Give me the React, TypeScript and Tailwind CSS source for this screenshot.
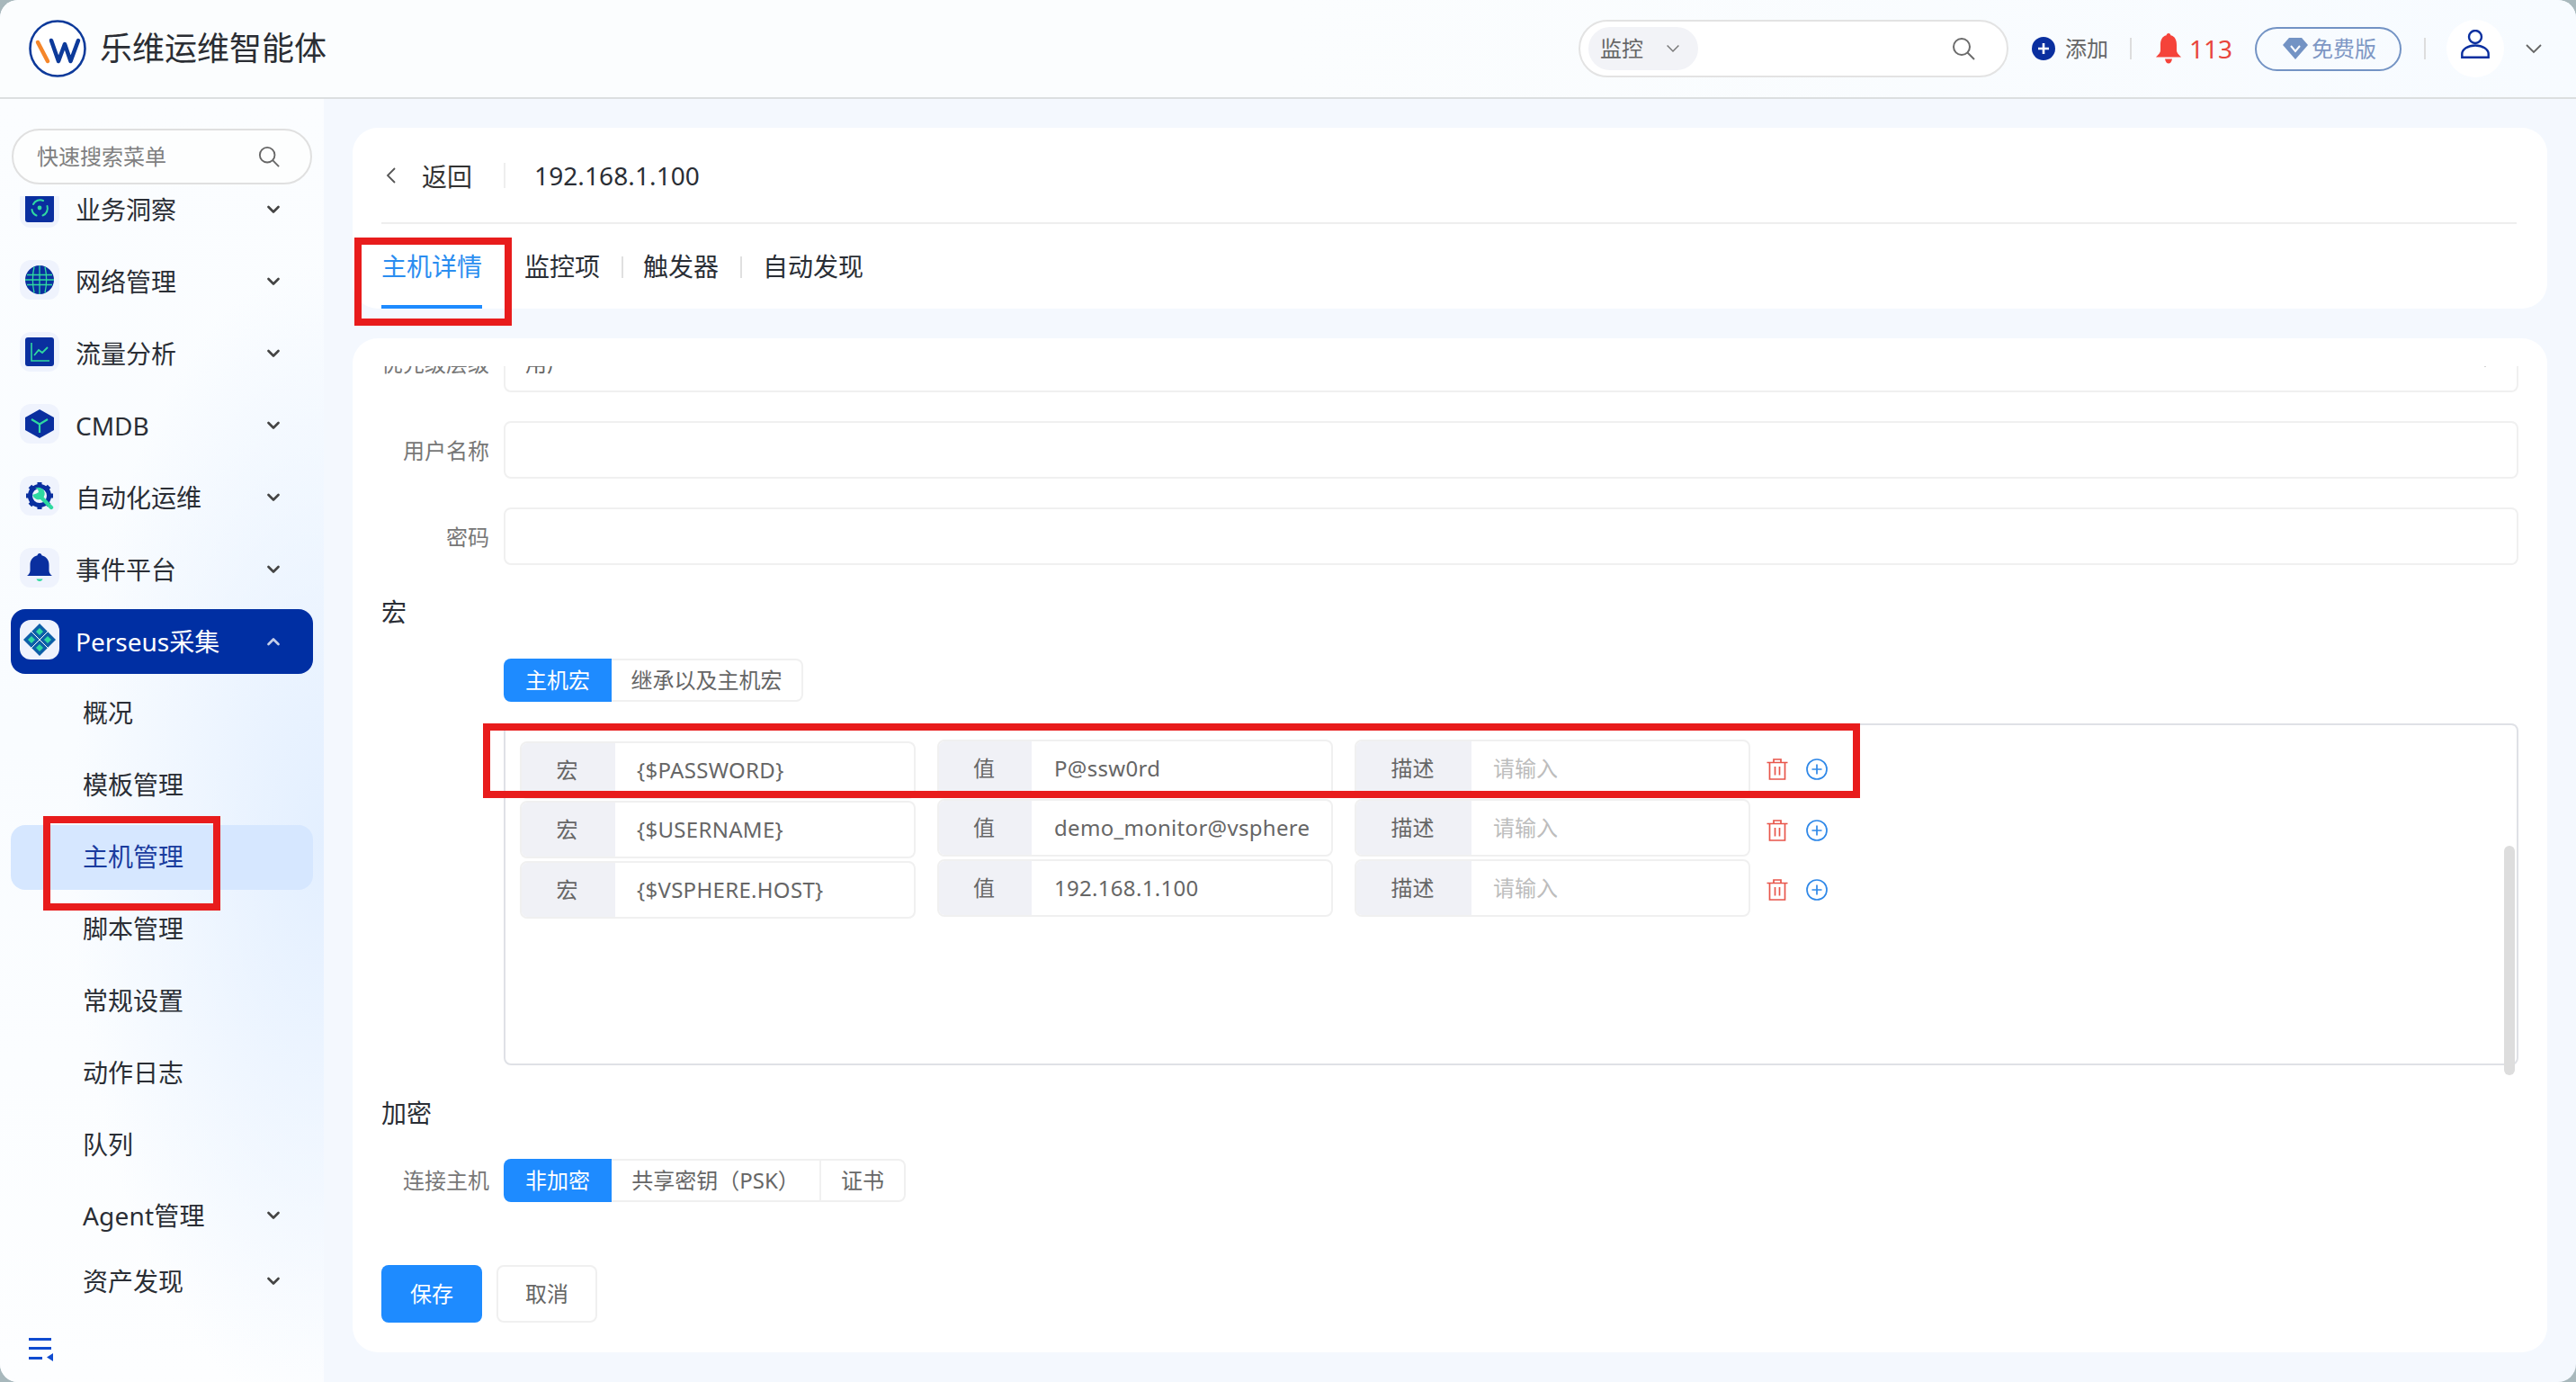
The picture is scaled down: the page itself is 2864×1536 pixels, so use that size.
import React from "react";

const Chev = ({ up = false, color = "#444" }: { up?: boolean; color?: string }) => (
  <svg width="14" height="10" viewBox="0 0 14 10" fill="none" className="ml-auto mr-[37px] shrink-0">
    <path d={up ? "M1.5 8L7 2.5L12.5 8" : "M1.5 2L7 7.5L12.5 2"} stroke={color} strokeWidth="2.6" strokeLinecap="round" strokeLinejoin="round" />
  </svg>
);

const Thin = ({ w = 14, c = "#777" }: { w?: number; c?: string }) => (
  <svg width={w} height={w * 0.6} viewBox="0 0 20 12" fill="none" className="shrink-0">
    <path d="M2 2L10 10L18 2" stroke={c} strokeWidth="1.8" />
  </svg>
);

const SearchIcon = ({ s = 26, c = "#6b6b6b" }: { s?: number; c?: string }) => (
  <svg width={s} height={s} viewBox="0 0 26 26" fill="none" className="shrink-0">
    <circle cx="11" cy="11" r="9" stroke={c} strokeWidth="2" />
    <path d="M17.5 17.5L25 25" stroke={c} strokeWidth="2" />
  </svg>
);

const Blue = "#0a2f9f";
const Green = "#2fd9a0";

const IconBiz = () => (
  <svg viewBox="0 0 32 32" className="w-[32px] h-[32px]">
    <rect width="32" height="32" rx="3" fill={Blue} />
    <path d="M9 12a8.5 8.5 0 0 1 11-4M24.5 14a8.5 8.5 0 0 1-5 10.5M12.5 24.5A8.5 8.5 0 0 1 7.5 18" fill="none" stroke={Green} strokeWidth="2" strokeLinecap="round" />
    <circle cx="16" cy="16" r="2.4" fill={Green} />
  </svg>
);
const IconGlobe = () => (
  <svg viewBox="0 0 32 32" className="w-[32px] h-[32px]">
    <circle cx="16" cy="16" r="16" fill={Blue} />
    <path d="M2 10.5h28M0 16h32M2 21.5h28M10 1.5c-2 9-2 20 0 29M16 0v32M22 1.5c2 9 2 20 0 29" fill="none" stroke={Green} strokeWidth="1.3" />
  </svg>
);
const IconChart = () => (
  <svg viewBox="0 0 32 32" className="w-[32px] h-[32px]">
    <rect width="32" height="32" rx="3" fill={Blue} />
    <path d="M7 6v20h20" fill="none" stroke={Green} strokeWidth="1.6" />
    <path d="M10 20l5-6 4 3 6-6" fill="none" stroke={Green} strokeWidth="1.8" />
  </svg>
);
const IconCube = () => (
  <svg viewBox="0 0 32 32" className="w-[32px] h-[32px]">
    <path d="M16 0L32 9V23L16 32L0 23V9Z" fill={Blue} />
    <path d="M7 11L16 16.5L25 11M16 16.5V26" fill="none" stroke={Green} strokeWidth="2.2" />
  </svg>
);
const IconGear = () => (
  <svg viewBox="0 0 32 32" className="w-[32px] h-[32px]">
    <circle cx="16" cy="16" r="10.5" fill="#eff3fd" stroke={Blue} strokeWidth="5" />
    <path d="M16 1v6M16 25v6M1 16h6M25 16h6M5.4 5.4l4.2 4.2M22.4 22.4l4.2 4.2M26.6 5.4l-4.2 4.2M9.6 22.4l-4.2 4.2" stroke={Blue} strokeWidth="5" />
    <path d="M17 17L29 29" stroke={Green} strokeWidth="4.4" strokeLinecap="round" />
    <path d="M11 7.500a7.500 7.500 0 0 1 10 3a7.500 7.500 0 0 1-2.500 9a7.500 7.500 0 0 1-10.500-4.500l4.500-1.500l2.500-1.500l-1-3.500Z" fill={Green} />
  </svg>
);
const IconBell = () => (
  <svg viewBox="0 0 32 32" className="w-[32px] h-[32px]">
    <path d="M16 0c1.5 0 2.3 1 2.4 2.3C24 3.6 26.5 8 26.5 13v6c0 3 1.8 4.6 3.5 6H2c1.700-1.400 3.500-3 3.500-6v-6C5.500 8 8 3.600 13.600 2.300 13.700 1 14.500 0 16 0Z" fill={Blue} />
    <path d="M12.500 28.500h7c-.5 1.600-1.700 2.500-3.500 2.500s-3-.9-3.500-2.500Z" fill={Green} />
  </svg>
);
const IconPerseus = () => (
  <svg viewBox="0 0 36 36" className="w-[36px] h-[36px]">
    <path d="M18 0L36 18L18 36L0 18Z" fill="#0d5fa8" />
    <path d="M9 9L27 27M27 9L9 27" stroke="#fff" strokeWidth="1" />
    <path d="M18 5l4 4-4 4-4-4ZM27 14l4 4-4 4-4-4ZM18 23l4 4-4 4-4-4ZM9 14l4 4-4 4-4-4Z" fill={Green} />
  </svg>
);

type Item = { label: string; icon?: React.ReactNode; arrow?: boolean; cls: string };

const top: Item[] = [
  { label: "业务洞察", icon: <IconBiz />, arrow: true, cls: "mb-[8px]" },
  { label: "网络管理", icon: <IconGlobe />, arrow: true, cls: "mb-[8px]" },
  { label: "流量分析", icon: <IconChart />, arrow: true, cls: "mb-[8px]" },
  { label: "CMDB", icon: <IconCube />, arrow: true, cls: "mb-[8px]" },
  { label: "自动化运维", icon: <IconGear />, arrow: true, cls: "mb-[8px]" },
  { label: "事件平台", icon: <IconBell />, arrow: true, cls: "mb-[8px]" },
];

const MenuRow = ({ it }: { it: Item }) => (
  <div className={`flex items-center h-[72px] pl-[10px] text-[28px] leading-[40px] text-[#2a2e35] ${it.cls}`}>
    <div className="w-[44px] h-[44px] rounded-[12px] bg-[#eff3fd] flex items-center justify-center mr-[18px] -mt-[4px]">{it.icon}</div>
    <span>{it.label}</span>
    {it.arrow && <Chev />}
  </div>
);

const subs = [
  { label: "概况" },
  { label: "模板管理" },
  { label: "主机管理", active: true },
  { label: "脚本管理" },
  { label: "常规设置" },
  { label: "动作日志" },
  { label: "队列" },
];

const Field = ({ label, value, clipTop = false, arrow = false }: { label: string; value?: string; clipTop?: boolean; arrow?: boolean }) => (
  <div className={`flex items-center h-[64px] gap-[16px] ${clipTop ? "-mt-[35px]" : "mt-[32px]"}`}>
    <div className={`w-[120px] text-right text-[24px] leading-[36px] text-[#777] whitespace-nowrap ${clipTop ? "" : "pt-[2px]"}`}>{label}</div>
    <div className="flex-1 h-full rounded-[8px] border-2 border-[#f0f0f0] flex items-center px-[22px] text-[24px] text-[#666] leading-[36px]">
      {value}
      {arrow && <span className="ml-auto mr-[6px]"><Thin w={14} c="#999" /></span>}
    </div>
  </div>
);

const Group = ({ addon, addonW, value, placeholder, cls, valueCls = "" }: { addon: string; addonW: string; value?: string; placeholder?: string; cls: string; valueCls?: string }) => (
  <div className={`flex w-[440px] h-[64px] rounded-[8px] border-2 border-[#f0f0f0] overflow-hidden bg-white ${cls}`}>
    <div className={`${addonW} shrink-0 bg-[#f0f1f6] flex items-center justify-center pr-[3px] text-[24px] text-[#666] leading-[36px]`}>{addon}</div>
    <div className={`flex-1 flex items-center text-[24px] leading-[36px] whitespace-nowrap ${placeholder ? "text-[#bdbdbd]" : "text-[#666] tracking-[0.3px]"} ${valueCls}`}>{value ?? placeholder}</div>
  </div>
);

const Trash = () => (
  <svg width="24" height="24" viewBox="0 0 24 24" fill="none" stroke="#e8564b" strokeWidth="1.7">
    <path d="M0.500 4.500H23.500M8 4.500V1H16V4.500M3.500 4.500V23H20.500V4.500M9.500 9V18.500M14.500 9V18.500" />
  </svg>
);
const PlusC = () => (
  <svg width="24" height="24" viewBox="0 0 24 24" fill="none" stroke="#2f88e8" strokeWidth="1.7">
    <circle cx="12" cy="12" r="11" />
    <path d="M12 6.500V17.500M6.500 12H17.500" />
  </svg>
);

const macros = [
  { k: "{$PASSWORD}", v: "P@ssw0rd", cls: "", act: "mt-[1px]" },
  { k: "{$USERNAME}", v: "demo_monitor@vsphere", cls: "mt-[2px]", act: "mt-[3px]" },
  { k: "{$VSPHERE.HOST}", v: "192.168.1.100", cls: "mt-[3px]", act: "mt-[2px]" },
];

export default function App() {
  return (
    <div className="w-[2864px] h-[1536px] bg-[#a8b8bc] overflow-hidden [font-family:'Noto_Sans','Noto_Sans_CJK_SC',sans-serif]">
      <div className="relative w-full h-full rounded-[20px] overflow-hidden flex flex-col bg-[#f4f8fe]">
        {/* header */}
        <header className="h-[110px] shrink-0 flex items-center border-b-2 border-[#dcdfe0] bg-[linear-gradient(90deg,#fbfdfe_0%,#fbfdfe_50%,#f7fbff_100%)] pl-[32px] pr-[37px]">
          <svg width="64" height="64" viewBox="0 0 64 64" fill="none" className="shrink-0">
            <circle cx="32" cy="32" r="30.500" fill="#fff" stroke="#0d3a9a" strokeWidth="2.600" />
            <path d="M10 25L21 46" stroke="#f5862a" strokeWidth="4.500" strokeLinecap="round" />
            <path d="M25 23L33 46L40 27L46.500 46L55 23" stroke="#0d3a9a" strokeWidth="4.500" strokeLinecap="round" strokeLinejoin="round" />
          </svg>
          <div className="ml-[15px] text-[36px] leading-[50px] text-[#2a2d33] whitespace-nowrap">乐维运维智能体</div>

          <div className="ml-auto w-[478px] h-[64px] rounded-full border-2 border-[#e3e3e3] bg-white flex items-center pl-[9px] pr-[35px]">
            <div className="w-[122px] h-[48px] rounded-full bg-[#f2f3f7] flex items-center pl-[13px] text-[24px] leading-[36px] text-[#666]">
              <span>监控</span>
              <span className="ml-[25px]"><Thin w={16} /></span>
            </div>
            <span className="ml-auto"><SearchIcon /></span>
          </div>

          <svg width="26" height="26" viewBox="0 0 26 26" className="ml-[26px] shrink-0">
            <circle cx="13" cy="13" r="13" fill="#0a2f9f" />
            <path d="M13 7V19M7 13H19" stroke="#fff" strokeWidth="2.600" />
          </svg>
          <span className="ml-[11px] text-[24px] leading-[36px] text-[#666] whitespace-nowrap">添加</span>
          <div className="ml-[24px] w-[2px] h-[24px] bg-[#ddd]" />
          <svg width="28" height="34" viewBox="0 0 28 34" className="ml-[27px] shrink-0">
            <path d="M14 0c1.500 0 2.300 1 2.400 2.300C21.500 3.500 23 8 23 13v6c0 3 2.800 5 5 7.500H0C2.200 24 5 22 5 19v-6C5 8 6.500 3.500 11.600 2.300 11.700 1 12.500 0 14 0Z" fill="#f5433a" />
            <path d="M10 28.500h8c-.5 3-2 5-4 5s-3.500-2-4-5Z" fill="#f5433a" />
          </svg>
          <span className="ml-[9px] text-[28px] leading-[40px] text-[#e8453c] whitespace-nowrap">113</span>
          <div className="ml-[25px] w-[163px] h-[49px] rounded-full border-2 border-[#7393c4] flex items-center pl-[29px] text-[24px] leading-[36px] text-[#7e97c4] whitespace-nowrap">
            <svg width="28" height="24" viewBox="0 0 28 24" className="shrink-0 mr-[4px]">
              <path d="M7 0H21L28 8L14 24L0 8Z" fill="#7393c4" />
              <path d="M9 9L14 15L19 9" fill="none" stroke="#fff" strokeWidth="2" />
            </svg>
            免费版
          </div>
          <div className="ml-[25px] w-[2px] h-[24px] bg-[#ddd]" />
          <div className="ml-[23px] w-[64px] h-[64px] rounded-full bg-white flex items-center justify-center shrink-0">
            <svg width="32" height="32" viewBox="0 0 32 32" fill="none" stroke="#0a2f9f" strokeWidth="2.400" className="-mt-[10px]">
              <circle cx="16" cy="8" r="7" />
              <path d="M1.300 30.800V27a14.700 9.500 0 0 1 29.400 0v3.800Z" />
            </svg>
          </div>
          <span className="ml-[23px]"><Thin w={20} c="#666" /></span>
        </header>

        <div className="flex-1 flex min-h-0">
          {/* sidebar */}
          <aside className="w-[360px] shrink-0 flex flex-col overflow-hidden bg-[radial-gradient(ellipse_at_100%_58%,#e3efff_0%,rgba(227,239,255,0)_55%),linear-gradient(180deg,#fbfdff_0%,#f9fcff_50%,#fdfeff_100%)]">
            <div className="mt-[33px] mx-[13px] h-[62px] shrink-0 rounded-full border-2 border-[#e0e0e0] bg-[#fdfefe] flex items-center pl-[26px] pr-[34px] text-[24px] leading-[36px] text-[#808080]">
              <span>快速搜索菜单</span>
              <span className="ml-auto"><SearchIcon s={24} c="#666" /></span>
            </div>
            <nav className="mt-[13px] h-[1252px] shrink-0 overflow-hidden px-[12px]">
              <div className="-mt-[21px]">
                {top.map((it) => (
                  <MenuRow key={it.label} it={it} />
                ))}
                <div className="flex items-center h-[72px] pl-[10px] rounded-[16px] bg-[#002fa3] text-[28px] leading-[40px] text-white mb-[8px]">
                  <div className="w-[44px] h-[44px] rounded-[12px] bg-[#eff3fd] flex items-center justify-center mr-[18px] -mt-[4px]">
                    <IconPerseus />
                  </div>
                  <span>Perseus采集</span>
                  <Chev up color="#c6cfe8" />
                </div>
                {subs.map((s) => (
                  <div
                    key={s.label}
                    className={`flex items-center h-[72px] pl-[80px] pb-[3px] mb-[8px] text-[28px] leading-[40px] rounded-[16px] ${s.active ? "bg-[#d6e7ff] text-[#1a3c9e]" : "text-[#2a2e35]"}`}
                  >
                    {s.label}
                  </div>
                ))}
                <div className="flex items-center h-[72px] pl-[80px] pb-[5px] text-[28px] leading-[40px] text-[#2a2e35] tracking-[0.2px]">
                  <span>Agent管理</span>
                  <Chev />
                </div>
                <div className="flex items-center h-[72px] pl-[80px] pb-[3px] text-[28px] leading-[40px] text-[#2a2e35]">
                  <span>资产发现</span>
                  <Chev />
                </div>
              </div>
            </nav>
            <div className="pl-[32px] pt-[17px]">
              <svg width="27" height="26" viewBox="0 0 27 26" fill="#0f4bd0">
                <rect x="0" y="0" width="25" height="3" />
                <rect x="0" y="10" width="25" height="3" />
                <rect x="0" y="21" width="15" height="3" />
                <path d="M27 17V26L20 21.500Z" />
              </svg>
            </div>
          </aside>

          {/* main */}
          <main className="flex-1 min-w-0 flex flex-col px-[32px] pt-[32px] pb-[33px] gap-[33px]">
            <section className="h-[201px] shrink-0 rounded-[28px] bg-white pl-[32px] pr-[34px] flex flex-col">
              <div className="h-[105px] shrink-0 flex items-center border-b-2 border-[#eeeeee] box-content">
                <svg width="12" height="20" viewBox="0 0 12 20" fill="none" className="ml-[5px] shrink-0">
                  <path d="M10 2L2 10L10 18" stroke="#555" strokeWidth="1.800" />
                </svg>
                <span className="ml-[28px] mt-[3px] text-[28px] leading-[40px] text-[#333]">返回</span>
                <div className="ml-[35px] w-[2px] h-[28px] bg-[#eeeeee]" />
                <span className="ml-[32px] text-[28px] leading-[40px] text-[#2a2e35] tracking-[0.1px]">192.168.1.100</span>
              </div>
              <div className="flex-1 flex text-[28px] leading-[40px] text-[#2a2e35]">
                <div className="w-[112px] h-full border-b-4 border-[#1e8bff] text-[#2a8df0] pt-[27px] whitespace-nowrap">主机详情</div>
                <div className="ml-[25px] mt-[36px] w-[2px] h-[24px] bg-[#e0e0e0]" />
                <div className="ml-[20px] pt-[27px] whitespace-nowrap">监控项</div>
                <div className="ml-[24px] mt-[36px] w-[2px] h-[24px] bg-[#e0e0e0]" />
                <div className="ml-[22px] pt-[27px] whitespace-nowrap">触发器</div>
                <div className="ml-[24px] mt-[36px] w-[2px] h-[24px] bg-[#e0e0e0]" />
                <div className="ml-[23px] pt-[27px] whitespace-nowrap">自动发现</div>
              </div>
            </section>

            <section className="flex-1 min-h-0 rounded-[28px] bg-white pl-[32px] pr-[32px] pt-[31px] flex flex-col">
              <div className="flex-1 min-h-0 overflow-hidden">
                <Field label="优先级层级" value="用户" clipTop arrow />
                <Field label="用户名称" />
                <Field label="密码" />

                <div className="mt-[32px] h-[40px] text-[28px] leading-[40px] text-[#2a2e35]">宏</div>
                <div className="mt-[32px] ml-[136px] flex h-[48px] text-[24px] leading-[36px]">
                  <div className="w-[120px] rounded-l-[8px] bg-[#1e8bff] text-white flex items-center justify-center">主机宏</div>
                  <div className="w-[213px] rounded-r-[8px] border-2 border-l-0 border-[#f0f0f0] text-[#666] flex items-center justify-center">继承以及主机宏</div>
                </div>

                <div className="relative mt-[24px] ml-[136px] h-[380px] rounded-[8px] border-2 border-[#dfe1e6] pt-[16px] pl-[16px]">
                  {macros.map((m) => (
                    <div key={m.k} className={`flex items-start h-[64px] gap-[24px] ${m.cls}`}>
                      <Group addon="宏" addonW="w-[104px]" value={m.k} cls="mt-[2px]" valueCls="pl-[24px]" />
                      <Group addon="值" addonW="w-[103px]" value={m.v} cls="" valueCls="pl-[25px]" />
                      <Group addon="描述" addonW="w-[128px]" placeholder="请输入" cls="" valueCls="pl-[24px]" />
                      <div className={`-ml-[6px] flex items-center gap-[20px] h-[64px] ${m.act}`}>
                        <Trash />
                        <PlusC />
                      </div>
                    </div>
                  ))}
                  <div className="absolute top-[134px] right-[2px] w-[12px] h-[255px] rounded-full bg-[#dddddd]" />
                </div>

                <div className="mt-[33px] h-[40px] text-[28px] leading-[40px] text-[#2a2e35]">加密</div>
                <div className="mt-[31px] flex items-center h-[48px] gap-[16px] text-[24px] leading-[36px]">
                  <div className="w-[120px] text-right text-[#777]">连接主机</div>
                  <div className="flex h-full">
                    <div className="w-[120px] rounded-l-[8px] bg-[#1e8bff] text-white flex items-center justify-center">非加密</div>
                    <div className="w-[233px] border-y-2 border-r-2 border-[#f0f0f0] text-[#666] flex items-center justify-center whitespace-nowrap">共享密钥（PSK）</div>
                    <div className="w-[94px] rounded-r-[8px] border-y-2 border-r-2 border-[#f0f0f0] text-[#666] flex items-center justify-center">证书</div>
                  </div>
                </div>
                <div className="mt-[70px] flex gap-[16px] text-[24px] leading-[36px]">
                  <div className="w-[112px] h-[64px] rounded-[8px] bg-[#1e8bff] text-white flex items-center justify-center">保存</div>
                  <div className="w-[112px] h-[64px] rounded-[8px] border-2 border-[#f0f0f0] text-[#666] flex items-center justify-center">取消</div>
                </div>
              </div>
            </section>
          </main>
        </div>

        {/* red annotation boxes laid over the page */}
        <div className="absolute left-[394px] top-[264px] w-[175px] h-[98px] border-8 border-[#e81c1c]" />
        <div className="absolute left-[48px] top-[907px] w-[197px] h-[105px] border-8 border-[#e81c1c]" />
        <div className="absolute left-[537px] top-[804px] w-[1531px] h-[83px] border-8 border-[#e81c1c]" />
      </div>
    </div>
  );
}
